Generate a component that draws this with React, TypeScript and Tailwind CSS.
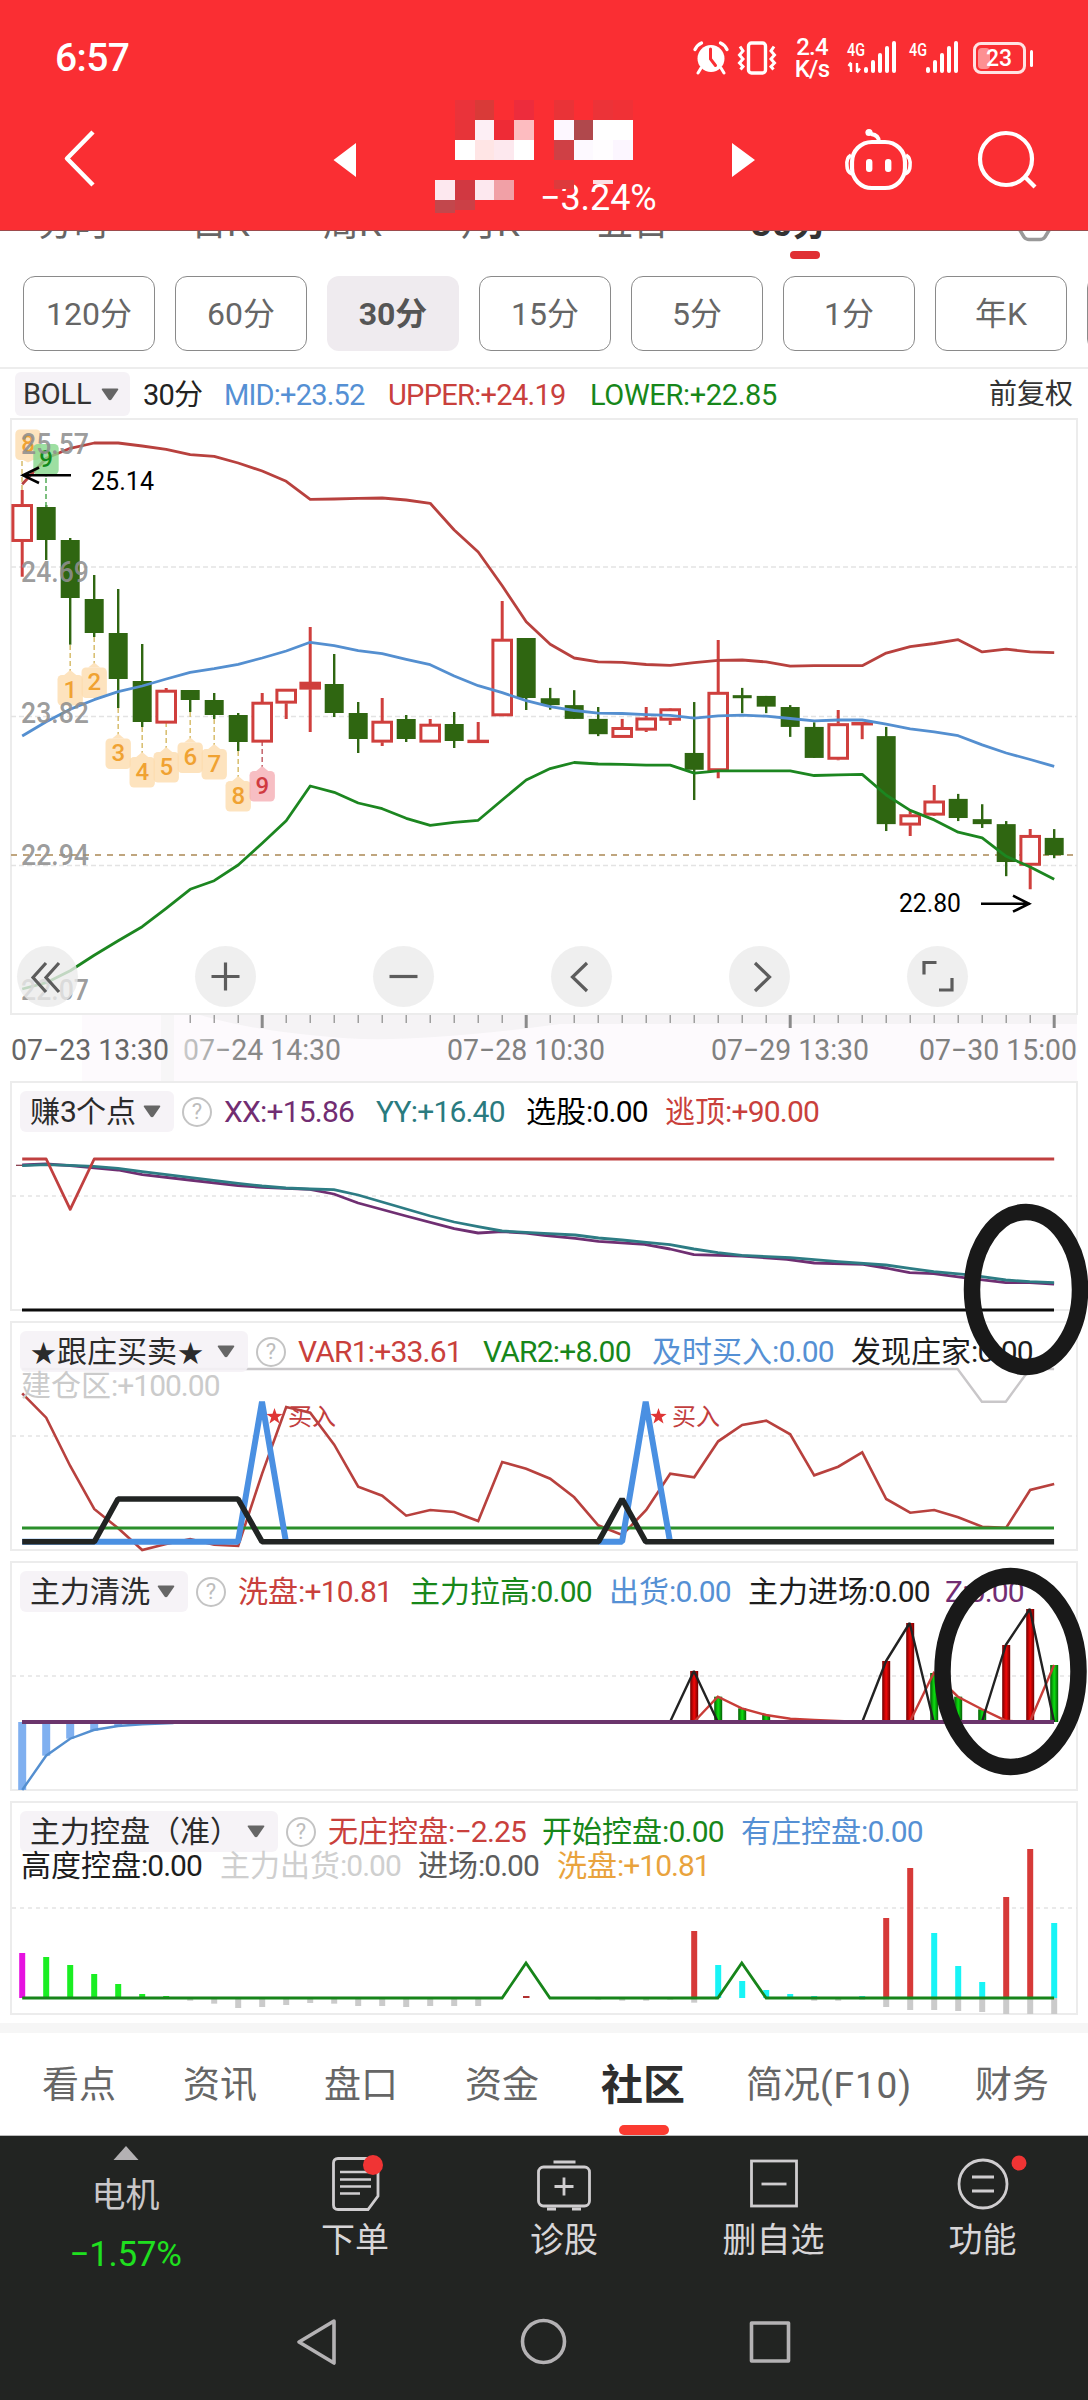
import React from "react";

/* ---------- shared helpers ---------- */

const GREEN = "#17841a";
const BLUE = "#548fd0";

const xAt = (i: number) => 22.2 + 24 * i;

const poly = (ys: number[], start = 0) =>
  ys.map((y, k) => `${xAt(start + k).toFixed(1)},${y.toFixed(1)}`).join(" ");

/* Latin runs are set tighter than Chinese runs */
function T({ children, latin = "tracking-[-0.8px]" }: { children: string; latin?: string }) {
  const parts = children.match(/[\x00-\x7f\u2212]+|\u2605|[^\x00-\x7f\u2212\u2605]+/g) ?? [];
  return (
    <>
      {parts.map((p, i) =>
        /^[\x00-\x7f\u2212]/.test(p) ? (
          <span key={i} className={latin}>{p}</span>
        ) : p === "\u2605" ? (
          <span key={i} className="inline-block w-[27px] text-center text-[25px] leading-none">{p}</span>
        ) : (
          <span key={i}>{p}</span>
        )
      )}
    </>
  );
}

/* ---------- header ---------- */

function Signal({ arrows }: { arrows?: boolean }) {
  return (
    <div className="flex h-[34px] w-[51px] items-start">
      <svg width="51" height="34" viewBox="0 0 51 34" fill="#fff" className="overflow-visible">
        <text x="0" y="14.5" fontSize="18" fontWeight="500" textLength="18" lengthAdjust="spacingAndGlyphs">4G</text>
        {arrows && (
          <path d="M4 22v9M1.5 25L4 21.5M10 22v9M10 31.5l3-4" stroke="#fff" strokeWidth="2.4" fill="none" />
        )}
        <rect x="17" y="26" width="4" height="6" rx="2" />
        <rect x="24" y="19" width="4" height="13" rx="2" />
        <rect x="31" y="12" width="4" height="20" rx="2" />
        <rect x="38" y="5" width="4" height="27" rx="2" />
        <rect x="45" y="0" width="4" height="32" rx="2" />
      </svg>
    </div>
  );
}

function StatusBar() {
  return (
    <div className="flex h-[116px] items-center pl-[55px] pr-[55px] text-white">
      <span className="text-[39px] leading-none font-medium tracking-[-0.6px]">6:57</span>
      <div className="ml-auto flex items-center">
        <svg width="38" height="34" viewBox="0 0 38 34">
          <circle cx="19" cy="17.5" r="13.5" fill="#fff" />
          <path d="M9 27l-3 5M29 27l3 5" stroke="#fff" strokeWidth="3" strokeLinecap="round" />
          <path d="M3 8.500Q5 4 9.500 2M35 8.500Q33 4 28.500 2" stroke="#fff" strokeWidth="3.200" fill="none" strokeLinecap="round" />
          <path d="M18.500 8v10l5 6.500" stroke="#fa2e33" strokeWidth="3" fill="none" strokeLinecap="round" />
        </svg>
        <svg className="ml-[7px]" width="40" height="34" viewBox="0 0 40 34" fill="none" stroke="#fff" strokeWidth="3.400">
          <rect x="11.500" y="2" width="17" height="30" rx="3" />
          <path d="M3 5.500l3 4.500-3.500 4 3.500 4-3.500 4 3.500 3.500-2.500 3M37 5.500l-3 4.500 3.500 4-3.500 4 3.500 4-3.500 3.500 2.500 3" strokeWidth="3" />
        </svg>
        <div className="ml-[17px] w-[36px] text-center text-[24px] leading-[22px] font-medium tracking-[-0.8px]">
          2.4
          <br />
          K/s
        </div>
        <div className="ml-[17px]"><Signal arrows /></div>
        <div className="ml-[11px]"><Signal /></div>
        <div className="ml-[13px] flex items-center">
          <div className="flex h-[32px] w-[53px] items-center rounded-[8px] border-[3px] border-[#ffe3e3] pl-[2px]">
            <div className="h-[21px] w-[12px] rounded-[4px] bg-[#fd9092]" />
            <span className="-ml-[4px] text-[23px] leading-none font-medium">23</span>
          </div>
          <div className="ml-[4px] h-[17px] w-[3px] rounded bg-white" />
        </div>
      </div>
    </div>
  );
}

/* censored stock name: [column, row top, colour, height] */
const MOSAIC: [number, number, string, number][] = [
  [0, 0, "#ea333a", 20], [1, 0, "#d93a38", 20], [3, 0, "#ed2c3c", 20], [5, 0, "#e93337", 20], [7, 0, "#ec3338", 20], [8, 0, "#f03136", 20],
  [0, 20, "#e73439", 20], [1, 20, "#fdeff5", 20], [2, 20, "#ee2b36", 20], [3, 20, "#fdbcc0", 20], [5, 20, "#fdf7ff", 20], [6, 20, "#b0484c", 20], [7, 20, "#fff", 20], [8, 20, "#fff", 20],
  [0, 40, "#fff", 20], [1, 40, "#ffe5e5", 20], [2, 40, "#fde8ee", 20], [3, 40, "#fff", 20], [5, 40, "#cf4045", 20], [6, 40, "#fdf9ff", 20], [7, 40, "#fffdff", 20], [8, 40, "#fcf6ff", 20],
  [-1, 80, "#fde8ef", 20], [0, 80, "#d13841", 20], [1, 80, "#fde8ef", 20], [2, 80, "#f1a0a6", 20], [5, 80, "#dd3a3c", 9], [7, 80, "#fbdfe4", 4],
  [-1, 100, "#c2474c", 13], [0, 100, "#cb4046", 10],
];

function TitleBar() {
  return (
    <div className="relative h-[114px]">
      <span className="absolute left-[540px] top-[64px] text-[36px] leading-none text-white tracking-[-0.1px]">−3.24%</span>
      <svg className="absolute inset-0" width="1088" height="114" viewBox="0 116 1088 114">
        <g fill="none" stroke="#fff" strokeLinejoin="round">
          <path d="M93 132L67 158.500L93 185" strokeWidth="4.500" />
          <rect x="852" y="142" width="53" height="46" rx="20" strokeWidth="4.200" />
          <path d="M851 155q-5 3-4 11q0 6 5 8M906 155q5 3 4 11q0 6-5 8" strokeWidth="3.600" />
          <path d="M879 142q0-7-8-8" strokeWidth="3.800" />
          <circle cx="1006" cy="159" r="26" strokeWidth="4.200" />
          <path d="M1025 177l10 10" strokeWidth="4.200" />
        </g>
        <g fill="#fff">
          <circle cx="869" cy="132.500" r="3.600" />
          <rect x="866" y="159" width="6.400" height="13" rx="3" />
          <rect x="885" y="159" width="6.400" height="13" rx="3" />
          <path d="M356 143v34l-22.500-17zM732 143v34l23-17z" />
        </g>
      </svg>
      <svg className="absolute left-[435px] -top-[16px]" width="200" height="114" shapeRendering="crispEdges">
        {MOSAIC.map(([c, y, fill, h], i) => (
          <rect key={i} x={(c + 1) * 19.8} y={y} width="19.8" height={h} fill={fill} />
        ))}
      </svg>
    </div>
  );
}

/* ---------- chart tabs and periods ---------- */

const TABS: [string, string][] = [
  ["分时", "w-[153px]"], ["日K", "w-[132px]"], ["周K", "w-[138px]"], ["月K", "w-[136px]"], ["五日", "w-[154px]"],
];

function ChartTabs() {
  return (
    <div className="relative h-[39px] overflow-hidden text-[36px] leading-[40px] text-[#666]">
      <div className="-mt-[26px] flex pl-[38px]">
        {TABS.map(([t, w]) => (
          <span key={t} className={w}>{t}</span>
        ))}
        <span className="font-bold text-[#333]">30分</span>
      </div>
      <svg className="absolute left-[1012px] top-0" width="46" height="14" viewBox="0 0 46 14">
        <path d="M6 -3L12 7Q14 9.500 17 9.500H28Q31 9.500 33 7L39 -3" fill="none" stroke="#999" strokeWidth="3.500" />
      </svg>
      <div className="absolute left-[790px] top-[21px] h-[8px] w-[30px] rounded-[4px] bg-[#e03034]" />
      <div className="absolute inset-x-0 top-0 h-px bg-[#9d4a4c]" />
    </div>
  );
}

function Periods() {
  const items = ["120分", "60分", "30分", "15分", "5分", "1分", "年K", ""];
  return (
    <div className="flex h-[100px] gap-[20px] overflow-hidden border-b-2 border-[#ededed] pl-[23px] pt-[7px]">
      {items.map((t, i) => (
        <div
          key={i}
          className={
            "flex h-[75px] w-[132px] shrink-0 items-center justify-center rounded-[12px] pt-[1px] text-[32px] " +
            (i === 2 ? "bg-[#efebef] font-bold text-[#555]" : "border border-[#8a8a8a] text-[#666]")
          }
        >
          {t}
        </div>
      ))}
    </div>
  );
}

function Caret() {
  return (
    <svg width="18" height="13" viewBox="0 0 18 13" className="shrink-0">
      <path d="M1.500 0.500H16.500Q18 0.500 17 2L10.500 11.500Q9 13 7.500 11.500L1 2Q0 0.500 1.500 0.500" fill="#666" />
    </svg>
  );
}

/* ---------- candlestick chart ---------- */

type Candle = [string, number, number, number, number];
const a = (v: number) => 420 + v / 3;
const b = (v: number) => 420 + v / 2.613;

const C1: Candle[] = [
  ["R", 210, 253, 365, 470], ["G", 255, 261, 360, 420], ["G", 354, 360, 534, 674], ["G", 465, 537, 639, 651],
  ["G", 507, 639, 777, 864], ["G", 672, 783, 906, 921], ["R", 804, 810, 910, 910], ["G", 810, 810, 840, 876],
  ["G", 819, 840, 885, 897], ["G", 879, 885, 966, 993], ["R", 819, 846, 967, 967], ["R", 808, 807, 850, 897],
  ["R", 621, 786, 808, 936], ["G", 702, 792, 879, 891], ["G", 846, 879, 957, 999], ["R", 834, 903, 967, 978],
  ["G", 885, 897, 957, 966], ["R", 897, 912, 967, 967], ["G", 876, 912, 963, 984], ["R", 906, 960, 968, 968],
  ["R", 543, 657, 888, 888], ["G", 654, 654, 834, 870],
];
const C2: Candle[] = [
  ["G", 700, 727, 745, 757], ["G", 706, 745, 781, 781], ["G", 750, 781, 821, 826], ["R", 781, 803, 830, 830],
  ["R", 750, 778, 811, 815], ["R", 755, 754, 785, 797], ["G", 737, 870, 914, 993], ["R", 575, 711, 917, 936],
  ["G", 700, 719, 727, 766], ["G", 721, 721, 749, 766], ["G", 745, 750, 802, 828], ["G", 790, 802, 883, 883],
  ["R", 758, 793, 887, 889], ["R", 790, 790, 797, 834], ["G", 802, 826, 1056, 1074], ["R", 1020, 1031, 1059, 1087],
  ["R", 954, 995, 1033, 1035], ["G", 977, 990, 1040, 1048], ["G", 1004, 1043, 1056, 1066], ["G", 1048, 1056, 1155, 1192],
  ["R", 1069, 1085, 1164, 1226], ["G", 1069, 1092, 1137, 1145],
];
const CANDLES: Candle[] = [
  ...C1.map(([k, ...v]) => [k, ...v.map(a)] as Candle),
  ...C2.map(([k, ...v]) => [k, ...v.map(b)] as Candle),
];

const UPPER = [
  ...[193, 115, 85, 69, 69, 78, 88, 104, 109, 129, 153, 184, 238, 237, 235, 234, 240, 250, 330, 396, 497, 605].map(a),
  ...[586, 622, 632, 633, 639, 641, 634, 628, 627, 632, 643, 642, 642, 642, 609, 592, 584, 574, 606, 599, 606, 608].map(b),
];
const MID = [
  ...[948, 905, 868, 839, 815, 798, 777, 757, 746, 733, 714, 693, 667, 677, 692, 701, 718, 734, 768, 797, 818, 842].map(a),
  ...[749, 759, 766, 767, 770, 772, 779, 773, 771, 774, 780, 786, 784, 784, 795, 807, 815, 825, 849, 870, 887, 905].map(b),
];
const LOWER = [
  989, 982.7, 970.7, 955.3, 940.7, 926.7, 908.3, 889.3, 880.7, 865, 843.3, 820.7, 786, 792.3, 803, 808.7, 818.3, 825.3, 822.3, 820.3, 800, 780,
  ...[911, 895, 899, 900, 902, 902, 923, 917, 917, 917, 917, 929, 927, 926, 980, 1020, 1045, 1077, 1092, 1140, 1168, 1200].map(b),
];

/* [label, x, box top, stem end, tone] */
const BADGES: [string, number, number, number, string][] = [
  ["8", 28, 429.500, 490, "o"], ["9", 46, 444, 507, "g"],
  ["1", xAt(2), 675, 645, "o"], ["2", xAt(3), 667.500, 637, "o"], ["3", xAt(4), 738.500, 708, "o"], ["4", xAt(5), 757, 727, "o"],
  ["5", xAt(6), 752, 722, "o"], ["6", xAt(7), 742.500, 712, "o"], ["7", xAt(8), 749, 719, "o"], ["8", xAt(9), 781, 751, "o"], ["9", xAt(10), 771, 741, "r"],
];
const TONE: Record<string, [string, string, string]> = {
  o: ["#fddcae", "#f0a232", "#d9c074"],
  g: ["#84d78b", "#128a1a", "#5cb060"],
  r: ["#f5aeb4", "#d03a40", "#c66b72"],
};

function Badge({ d }: { d: (typeof BADGES)[number] }) {
  const [t, x, y, stem, tone] = d;
  const [bg, fg, ln] = TONE[tone];
  const up = stem < y;
  const sx = up ? x : tone === "g" ? 46 : 22;
  return (
    <g>
      <line x1={sx} x2={sx} y1={stem} y2={up ? y - 4 : y + 31} stroke={ln} strokeWidth="1.600" strokeDasharray="5 3" />
      <rect x={x - 12.7} y={y} width="25.400" height="30.500" rx="4.500" fill={bg} fillOpacity="0.8" />
      <path d={up ? `M${x - 6} ${y}L${x} ${y - 5}L${x + 6} ${y}z` : `M${x - 5} ${y + 30.5}L${x} ${y + 33}L${x + 5} ${y + 30.5}z`} fill={bg} fillOpacity="0.8" />
      <text x={x} y={y + 22.5} fontSize="24" fontWeight="500" fill={fg} textAnchor="middle">{t}</text>
    </g>
  );
}

const PRICES: [string, number][] = [["25.57", 453.7], ["24.69", 581.7], ["23.82", 723.3], ["22.94", 865], ["22.07", 999.7]];
const DATES: [string, number, string][] = [
  ["07−23 13:30", 11, "#666"], ["07−24 14:30", 183, "#888"], ["07−28 10:30", 447, "#808080"], ["07−29 13:30", 711, "#808080"], ["07−30 15:00", 919, "#808080"],
];

function Tools() {
  const icons = [
    <path key="a" d="M29 17L16 31.500L29 46M42 17L29 31.500L42 46" />,
    <path key="b" d="M30.500 16.500v28M16.500 30.500h28" />,
    <path key="c" d="M16.500 30.500h28" />,
    <path key="d" d="M36 17L21.500 31L36 45" />,
    <path key="e" d="M26 17L40.500 31L26 45" />,
    <path key="f" d="M29.500 16.500H17V28.500M32 44H45V32" />,
  ];
  return (
    <div className="absolute left-[17px] top-[528px] flex gap-[117px]">
      {icons.map((ic, i) => (
        <button key={i} className="h-[61px] w-[61px] rounded-full bg-[#ebebeb]/80">
          <svg width="61" height="61" viewBox="0 0 61 61" fill="none" stroke="#5c5c5c" strokeWidth="3.200">{ic}</svg>
        </button>
      ))}
    </div>
  );
}

function MainChart() {
  return (
    <div className="relative h-[663px]">
      <svg className="absolute inset-0" width="1088" height="663" viewBox="0 418 1088 663">
        <defs>
          <linearGradient id="fade" x1="0" x2="1">
            <stop offset="0" stopColor="#ccc" />
            <stop offset="0.35" stopColor="#888" />
          </linearGradient>
        </defs>
        <rect x="82" y="1014" width="995" height="67" fill="#fdfafd" />
        <path d="M200 1015H1077V1024H560Q400 1046 320 1036Q250 1030 200 1015z" fill="#f5f3f5" />
        <rect x="161" y="1014" width="13" height="67" fill="#f7f6f7" />
        <rect x="11" y="419" width="1066" height="595" fill="#fff" stroke="#ececec" strokeWidth="2" />
        <path d="M11 567H1077M11 716.500H1077M11 865.500H1077" stroke="#e3e3e3" strokeWidth="1.500" strokeDasharray="5 3" />
        <path d="M11 855H1077" stroke="#bfa57e" strokeWidth="2" strokeDasharray="6 6" />
        {BADGES.slice(2).map((d, i) => <Badge key={i} d={d} />)}
        {CANDLES.map(([k, hi, top, bot, lo], i) => {
          const x = xAt(i);
          return k === "G" ? (
            <g key={i} fill="#2f6611">
              <rect x={x - 1.2} y={hi} width="2.400" height={lo - hi} />
              <rect x={x - 9.5} y={top} width="19" height={bot - top} />
            </g>
          ) : (
            <g key={i}>
              <path d={`M${x} ${hi}V${top}M${x} ${bot}V${lo}`} stroke="#cf3f3d" strokeWidth="3" />
              <rect x={x - 9.3} y={top + 1.2} width="18.600" height={Math.max(bot - top - 2.4, 0.4)} fill={bot - top < 8.5 ? "#cf3f3d" : "#fff"} stroke="#cf3f3d" strokeWidth="3" />
            </g>
          );
        })}
        <g fill="none" strokeWidth="2.800" strokeLinejoin="round">
          <polyline points={poly(UPPER)} stroke="#b8413e" />
          <polyline points={poly(MID)} stroke={BLUE} />
          <polyline points={poly(LOWER)} stroke="#1c8620" />
        </g>
        {BADGES.slice(0, 2).map((d, i) => <Badge key={i} d={d} />)}
        <g fill="#8f8f8f" fontSize="29" fontWeight="500">
          {PRICES.map(([t, y]) => (
            <text key={t} x="21" y={y} textLength="68" lengthAdjust="spacingAndGlyphs" fillOpacity="0.9">{t}</text>
          ))}
        </g>
        <path d="M71 475.300H22M39 467.500L23 475.300L39 483" stroke="#000" strokeWidth="2.600" fill="none" />
        <path d="M981 903.700H1030M1013 895.700L1029 903.700L1013 911.700" stroke="#000" strokeWidth="2.600" fill="none" />
        <g fontSize="25" fill="#000">
          <text x="91" y="489.500" textLength="63" lengthAdjust="spacingAndGlyphs">25.14</text>
          <text x="899" y="912" textLength="62" lengthAdjust="spacingAndGlyphs">22.80</text>
        </g>
        {Array.from({ length: 37 }, (_, k) => k + 7).map((i) => {
          const major = i % 11 === 10;
          return <rect key={i} x={xAt(i) - (major ? 1.5 : 0.6)} y="1015" width={major ? 3 : 1.2} height={major ? 13 : 8} fill="#8a8a8a" />;
        })}
        <g fontSize="29">
          {DATES.map(([t, x, c], i) => (
            <text key={t} x={x} y="1059.700" fill={i === 1 ? "url(#fade)" : c} textLength="158" lengthAdjust="spacingAndGlyphs">{t}</text>
          ))}
        </g>
      </svg>
      <Tools />
    </div>
  );
}

/* ---------- indicator panels ---------- */

type Item = [string, string, string];

function Panel({ title, box, height, top, items, row2, children }: {
  title: string; box: string; height: string; top: number; items: Item[]; row2?: Item[]; children: React.ReactNode;
}) {
  return (
    <section className={"relative mb-[10px] text-[30px] leading-[41px] whitespace-nowrap " + height}>
      <div className="absolute inset-y-0 left-[10px] right-[10px] border-2 border-[#ececec]" />
      <svg className="absolute inset-0 overflow-visible" width="1088" height="230" viewBox={`0 ${top} 1088 230`}>{children}</svg>
      <div className="relative flex pl-[20px] pt-[10px]">
        <div className={"flex h-[41px] items-center justify-between rounded-[6px] bg-[#f5f2f6]/90 pl-[10px] pr-[13px] text-[#2b2b2b] " + box}>
          <span><T>{title}</T></span>
          <Caret />
        </div>
        <div className="ml-[8px] mt-[6px] flex h-[30px] w-[30px] items-center justify-center rounded-full border-2 border-[#c4c4c4] text-[22px] leading-none text-[#bdbdbd]">?</div>
        <div className="ml-[12px] flex">
          {items.map(([t, c, w]) => (
            <span key={t} className={"shrink-0 " + c + " " + w}><T>{t}</T></span>
          ))}
        </div>
      </div>
      {row2 && (
        <div className="relative -mt-[7px] flex pl-[21px]">
          {row2.map(([t, c, w]) => (
            <span key={t} className={"shrink-0 " + c + " " + w}><T latin="tracking-[-1px]">{t}</T></span>
          ))}
        </div>
      )}
    </section>
  );
}

const pts = (o: number, left: [number, number][], right: [number, number][]) =>
  [
    ...left.map(([x, y]) => `${(x / 2.882).toFixed(1)},${(o + y / 3).toFixed(1)}`),
    ...right.map(([x, y]) => `${(544 + x / 2.882).toFixed(1)},${(o + y / 3).toFixed(1)}`),
  ].join(" ");

const Dash = ({ y }: { y: number }) => <path d={`M12 ${y}H1077`} stroke="#e4e4e4" strokeWidth="1.600" strokeDasharray="4 4" />;

const TEAL = pts(
  1070,
  [[64, 287], [133, 284], [202, 286], [270, 289], [340, 295], [410, 305], [545, 322], [686, 340], [755, 348], [824, 354], [893, 357], [962, 359], [1032, 375], [1240, 438], [1309, 456], [1378, 470], [1447, 483]],
  [[0, 490], [90, 495], [157, 504], [225, 510], [295, 517], [363, 524], [432, 537], [501, 548], [570, 556], [710, 563], [848, 575], [985, 585], [1054, 595], [1123, 605], [1210, 613], [1262, 620], [1331, 630], [1400, 635], [1470, 638]]
);
const PURPLE = pts(
  1070,
  [[64, 285], [133, 282], [202, 287], [340, 300], [410, 314], [545, 330], [686, 347], [755, 352], [893, 358], [962, 372], [1032, 399], [1170, 438], [1309, 476], [1378, 489], [1447, 485], [1516, 489]],
  [[0, 496], [90, 505], [157, 514], [290, 523], [363, 537], [432, 554], [570, 558], [700, 568], [779, 579], [920, 583], [985, 594], [1054, 608], [1123, 611], [1210, 623], [1331, 638], [1400, 638], [1470, 642]]
);
const VAR1 = [
  250, 323, 468, 597, 655, 720, 702, 687, 704, 708, 490, 291, 308, 404, 530, 557, 617, 600, 606, 633, 456, 476,
  506, 562, 646, 675, 600, 491, 502, 394, 345, 332, 373, 496, 470, 427, 567, 608, 600, 622, 650, 653, 540, 522,
].map((v) => 1310 + v / 3);

const star = (cx: number, cy: number, r: number) =>
  Array.from({ length: 10 }, (_, k) => {
    const q = k % 2 ? r * 0.4 : r;
    const t = -Math.PI / 2 + (k * Math.PI) / 5;
    return `${(cx + q * Math.cos(t)).toFixed(1)},${(cy + q * Math.sin(t)).toFixed(1)}`;
  }).join(" ");

const WASH_RED: [number, number][] = [[28, 1083], [36, 1053], [37, 939], [41, 1005], [42, 897]];
const WASH_GREEN: [number, number][] = [[29, 1160], [30, 1195], [31, 1215], [38, 1089], [39, 1160], [40, 1198], [43, 1065]];
const WASH_BLUE = [1440, 1337, 1286, 1262, 1248];

/* control panel bars: [index, edge, colour] */
const CTRL: [number, number, string][] = [
  [0, 489, "#e612e0"], [1, 501, "#1aee22"], [2, 525, "#1aee22"], [3, 552, "#1aee22"], [4, 582, "#1aee22"], [5, 612, "#1aee22"], [6, 618, "#1aee22"],
  [28, 423, "#d63a38"], [36, 384, "#d63a38"], [37, 234, "#d63a38"], [41, 321, "#d63a38"], [42, 177, "#d63a38"],
  [29, 525, "#18f4f6"], [30, 573, "#18f4f6"], [31, 600, "#18f4f6"], [32, 612, "#18f4f6"], [33, 618, "#18f4f6"], [35, 618, "#18f4f6"],
  [38, 429, "#18f4f6"], [39, 528, "#18f4f6"], [40, 576, "#18f4f6"], [43, 399, "#18f4f6"],
];
const CTRL_LOW: [number, number][] = [
  [7, 632], [8, 641], [9, 654], [10, 651], [11, 645], [12, 639], [13, 641], [14, 648], [15, 648], [16, 651], [17, 648], [18, 648], [19, 648],
  [24, 629], [25, 632], [26, 632], [27, 629], [28, 638], [33, 632], [34, 632], [35, 629], [36, 651], [37, 660], [38, 660], [39, 663], [40, 666], [41, 672], [42, 672], [43, 672],
];

const R = "text-[#c9403c]";
const G = "text-[#17871a]";
const B = "text-[#5590d4]";
const K = "text-[#1d1d1d]";

function Panels() {
  return (
    <>
      <Panel
        title="赚3个点" box="w-[154px]" height="h-[230px]" top={1081}
        items={[["XX:+15.86", "text-[#722d72]", "w-[152px]"], ["YY:+16.40", "text-[#2a7b7f]", "w-[150px]"], ["选股:0.00", "text-black", "w-[139px]"], ["逃顶:+90.00", R, ""]]}
      >
        <Dash y={1196} />
        <g fill="none" strokeWidth="2.800" strokeLinejoin="round">
          <path d="M16 1165.300h7" stroke="#803040" strokeWidth="1.200" />
          <polyline points={PURPLE} stroke="#6f2f72" />
          <polyline points={TEAL} stroke="#2d7c84" />
          <polyline points="22.200,1159 46.200,1159 70.200,1209.300 94.200,1159 1054.200,1159" stroke="#c04040" />
          <path d="M22 1310H1054" stroke="#0c0c0c" strokeWidth="3" />
        </g>
      </Panel>

      <Panel
        title="★跟庄买卖★" box="w-[228px]" height="h-[230px]" top={1321}
        items={[["VAR1:+33.61", R, "w-[185px]"], ["VAR2:+8.00", G, "w-[169px]"], ["及时买入:0.00", B, "w-[199px]"], ["发现庄家:0.00", K, ""]]}
        row2={[["建仓区:+100.00", "text-[#cbcbcb]", ""]]}
      >
        <Dash y={1436} />
        <g fill="none" strokeLinejoin="miter">
          <polyline points={pts(1310, [[64, 177]], [[1192, 177], [1262, 275], [1331, 275], [1400, 177], [1470, 177]])} stroke="#c9c7c9" strokeWidth="2.400" />
          <polyline points={poly(VAR1)} stroke="#b8413e" strokeWidth="2.600" />
          <path d="M22 1528H1054" stroke="#2b8f2b" strokeWidth="2.800" />
          <polyline points={pts(1310, [[64, 695], [686, 695], [755, 275], [824, 695]], [])} stroke="#4a90e2" strokeWidth="6" strokeLinejoin="bevel" />
          <polyline points={pts(1310, [], [[157, 695], [225, 695], [293, 275], [363, 695]])} stroke="#4a90e2" strokeWidth="6" strokeLinejoin="bevel" />
          <polyline
            points={pts(1310, [[64, 695], [272, 695], [340, 567], [686, 567], [755, 695]], [[157, 695], [225, 567], [293, 695], [1470, 695]])}
            stroke="#212423" strokeWidth="5.600" strokeLinejoin="bevel"
          />
        </g>
        <g fill="#c23e3e" fontSize="24">
          <polygon points={star(274.5, 1416.5, 8.5)} fill="#df3535" />
          <text x="288" y="1425">买入</text>
          <polygon points={star(658.5, 1416.5, 8.5)} fill="#df3535" />
          <text x="672" y="1425">买入</text>
        </g>
      </Panel>

      <Panel
        title="主力清洗" box="w-[168px]" height="h-[230px]" top={1561}
        items={[["洗盘:+10.81", R, "w-[172px]"], ["主力拉高:0.00", G, "w-[199px]"], ["出货:0.00", B, "w-[139px]"], ["主力进场:0.00", K, "w-[197px]"], ["Z:0.00", "text-[#722d72]", ""]]}
      >
        <defs>
          <linearGradient id="rb" x1="0" x2="1"><stop offset="0" stopColor="#6e0000" /><stop offset="0.5" stopColor="#f40808" /><stop offset="1" stopColor="#6e0000" /></linearGradient>
          <linearGradient id="gb" x1="0" x2="1"><stop offset="0" stopColor="#045c04" /><stop offset="0.5" stopColor="#0ce010" /><stop offset="1" stopColor="#045c04" /></linearGradient>
        </defs>
        <Dash y={1676} />
        {WASH_BLUE.map((v, i) => <rect key={i} x={xAt(i) - 4} y="1722" width="8" height={v / 3 - 412} fill="#80b0f0" />)}
        {WASH_RED.map(([i, v]) => <rect key={i} x={xAt(i) - 4} y={1310 + v / 3} width="8" height={412 - v / 3} fill="url(#rb)" />)}
        {WASH_GREEN.map(([i, v]) => <rect key={i} x={xAt(i) - 4} y={1310 + v / 3} width="8" height={412 - v / 3} fill="url(#gb)" />)}
        <g fill="none" strokeWidth="2.400">
          <polyline points={pts(1310, [[64, 1440], [133, 1337], [202, 1286], [270, 1260], [340, 1248], [410, 1243], [500, 1239]], [])} stroke={BLUE} />
          <g stroke="#c83d38">
            <polyline points={pts(1310, [], [[432, 1236], [501, 1160], [570, 1195], [640, 1215], [710, 1226], [779, 1230], [917, 1236]])} />
            <polyline points={pts(1310, [], [[1054, 1236], [1123, 1089], [1193, 1160], [1262, 1198], [1331, 1232], [1400, 1236], [1470, 1065]])} />
          </g>
          <polyline
            points={pts(1310, [], [[363, 1236], [432, 1083], [501, 1236], [917, 1236], [986, 1053], [1054, 939], [1123, 1236], [1262, 1236], [1331, 1005], [1400, 897], [1470, 1236]])}
            stroke="#222" strokeLinejoin="bevel"
          />
          <path d="M22 1722H1054" stroke="#6b356c" strokeWidth="4" />
        </g>
      </Panel>

      <Panel
        title="主力控盘（准）" box="w-[258px]" height="h-[214px]" top={1801}
        items={[["无庄控盘:−2.25", R, "w-[214px]"], ["开始控盘:0.00", G, "w-[199px]"], ["有庄控盘:0.00", B, ""]]}
        row2={[["高度控盘:0.00", K, "w-[199px]"], ["主力出货:0.00", "text-[#cfcfcf]", "w-[198px]"], ["进场:0.00", "text-[#5c5c5c]", "w-[139px]"], ["洗盘:+10.81", "text-[#e9a33d]", ""]]}
      >
        <Dash y={1908} />
        {CTRL_LOW.map(([i, v]) => <rect key={i} x={xAt(i) - 3} y="1998" width="6" height={v / 3 - 208} fill="#cbcbcb" />)}
        {CTRL.map(([i, v, c]) => <rect key={i} x={xAt(i) - 3} y={1790 + v / 3} width="6" height={208 - v / 3} fill={c} />)}
        <rect x="523" y="1996" width="6.500" height="2" fill="#b03030" />
        <polyline
          points={pts(1790, [[64, 624], [1447, 624], [1516, 519]], [[17, 624], [501, 624], [570, 519], [640, 624], [1470, 624]])}
          fill="none" stroke={GREEN} strokeWidth="2.800"
        />
      </Panel>
    </>
  );
}

/* ---------- bottom area ---------- */

const INFO: [string, string][] = [
  ["看点", "w-[141px]"], ["资讯", "w-[141px]"], ["盘口", "w-[141px]"], ["资金", "w-[136px]"], ["社区", "w-[145px]"], ["简况(F10)", "w-[229px]"], ["财务", ""],
];

function InfoTabs() {
  return (
    <div className="relative flex h-[103px] items-center border-b border-[#bbb] pl-[42px] pt-[4px] text-[37px] whitespace-nowrap text-[#666]">
      {INFO.map(([t, w], i) => (
        <span key={t} className={"shrink-0 " + w + (i === 4 ? " text-[42px] leading-none font-bold text-[#2e2e2e]" : "")}>
          <T latin="tracking-[0.9px]">{t}</T>
        </span>
      ))}
      <div className="absolute bottom-0 left-[619px] h-[10px] w-[50px] rounded-[5px] bg-[#fb3b31]" />
    </div>
  );
}

const ACTIONS: [string, string, React.ReactNode][] = [
  ["下单", "w-[208px]", (
    <>
      <path d="M6 1.500H43Q46 1.500 46 5V39L36 52.500H6Q1.500 52.500 1.500 48V6Q1.500 1.500 6 1.500z" transform="translate(5 0)" />
      <path d="M13 15h29M13 22.500h31M13 29.500h31M13 36.500h20" strokeWidth="2.600" />
      <circle cx="46" cy="8" r="10" fill="#f03434" stroke="none" />
    </>
  )],
  ["诊股", "w-[210px]", (
    <>
      <rect x="2.500" y="10" width="51" height="39" rx="5" />
      <path d="M17.500 5h22M28 20.500v18M18.500 29.500h19M11 52h9M36 52h9" />
    </>
  )],
  ["删自选", "w-[209px]", (
    <>
      <rect x="5.500" y="4" width="45" height="45" />
      <path d="M15.500 27h25" />
    </>
  )],
  ["功能", "w-[209px]", (
    <>
      <circle cx="28" cy="27" r="24" />
      <path d="M17 20h22M17 34h22" />
      <circle cx="64" cy="6" r="7.500" fill="#f03434" stroke="none" />
    </>
  )],
];

function ActionBar() {
  return (
    <div className="flex h-[154px] bg-[#222422] text-[34px] leading-[40px] text-[#d8d6d8]">
      <div className="flex w-[251px] flex-col items-center">
        <svg className="mt-[10px]" width="26" height="14" viewBox="0 0 26 14"><path d="M13 0L25.500 14H0.500z" fill="#b3b1b3" /></svg>
        <span className="mt-[15px] text-[#c9c7c9]">电机</span>
        <span className="mt-[20px] text-[35px] text-[#1fe01f] tracking-[-0.3px]">−1.57%</span>
      </div>
      {ACTIONS.map(([t, w, ic]) => (
        <div key={t} className={"flex flex-col items-center pt-[21px] " + w}>
          <svg width="56" height="54" viewBox="0 0 56 54" fill="none" stroke="#cfcdcf" strokeWidth="2.800" className="overflow-visible">{ic}</svg>
          <span className="mt-[9px]">{t}</span>
        </div>
      ))}
    </div>
  );
}

function SystemNav() {
  return (
    <div className="flex h-[110px] items-start bg-[#222422] pl-[295px] pt-[27px]">
      <svg width="496" height="50" viewBox="295 2317 496 50" fill="none" stroke="#b4b2b4" strokeWidth="3.600" strokeLinejoin="round">
        <path d="M334 2321L299 2342L334 2363z" />
        <circle cx="543.500" cy="2341.500" r="21" />
        <rect x="751.500" y="2323" width="37" height="38" />
      </svg>
    </div>
  );
}

export default function App() {
  return (
    <div className="relative h-[2400px] w-[1088px] overflow-hidden bg-white font-['Roboto','Noto_Sans_CJK_SC',sans-serif]">
      <header className="bg-[#fa2e33]">
        <StatusBar />
        <TitleBar />
      </header>
      <ChartTabs />
      <Periods />
      <div className="flex h-[49px] items-start pl-[15px] pr-[15px] pt-[3px] text-[29px] leading-[46px] whitespace-nowrap">
        <div className="flex h-[44px] w-[115px] shrink-0 items-center justify-between rounded-[6px] bg-[#f5f2f6] pl-[8px] pr-[11px] text-[#333]">
          <T latin="tracking-[-0.2px]">BOLL</T>
          <Caret />
        </div>
        <span className="ml-[13px] w-[81px] shrink-0 text-[#222]"><T>30分</T></span>
        <span className="w-[164px] shrink-0 text-[#5590d4]"><T>MID:+23.52</T></span>
        <span className="w-[202px] shrink-0 text-[#c9403c]"><T latin="tracking-[-0.7px]">UPPER:+24.19</T></span>
        <span className="shrink-0 text-[#17871a]"><T latin="tracking-[-0.35px]">LOWER:+22.85</T></span>
        <span className="ml-auto text-[28px] text-[#333]">前复权</span>
      </div>
      <MainChart />
      <Panels />
      <div className="-mt-[2px] h-[10px] bg-[#f6f6f6]" />
      <InfoTabs />
      <ActionBar />
      <SystemNav />
      {/* hand-drawn highlight rings */}
      <svg className="pointer-events-none absolute left-0 top-[1195px]" width="1088" height="590" viewBox="0 1195 1088 590" fill="none" stroke="#191919" strokeWidth="16.500">
        <ellipse cx="1026" cy="1289.500" rx="54" ry="77.500" />
        <ellipse cx="1010.500" cy="1671.500" rx="68" ry="95.500" />
      </svg>
    </div>
  );
}
